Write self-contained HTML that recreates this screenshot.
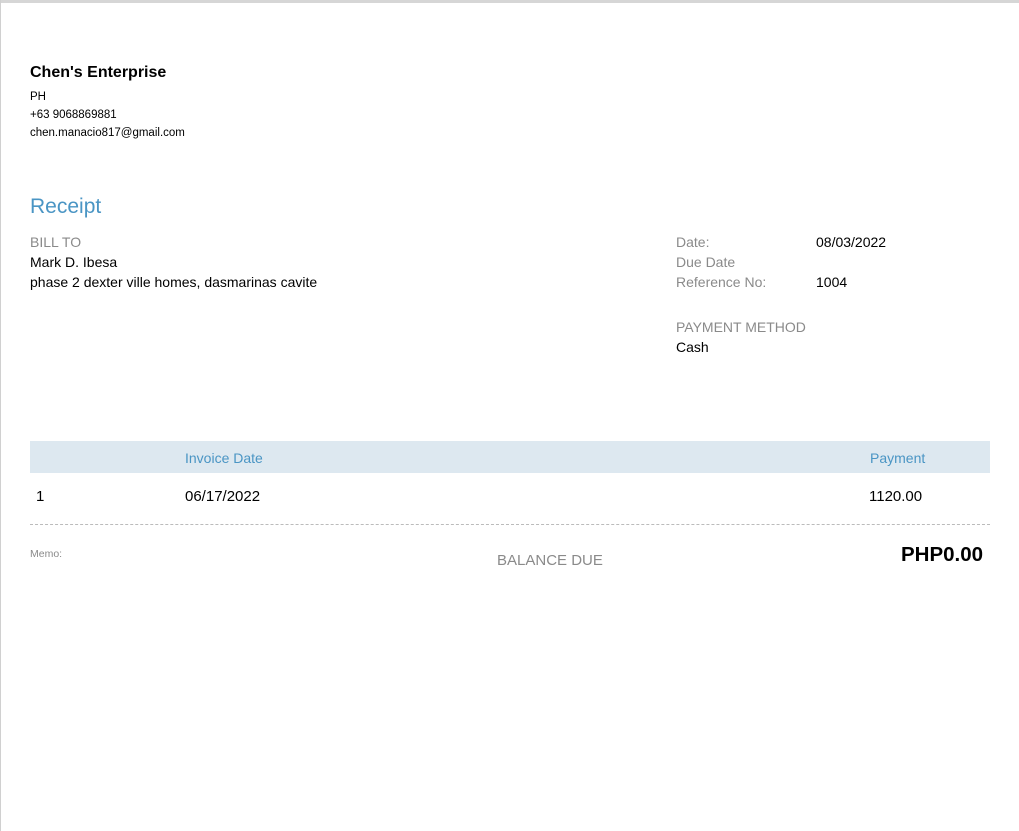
<!DOCTYPE html>
<html><head><meta charset="utf-8"><style>
*{margin:0;padding:0;box-sizing:border-box}
body{width:1019px;height:831px;background:#fff;font-family:"Liberation Sans",Arial,sans-serif;position:relative;overflow:hidden}
.a{position:absolute;white-space:nowrap;line-height:1}
.g{color:#8a8a8a}
.b{color:#4a95c4}
</style></head><body>
<div class="a" style="left:0;top:0;width:1019px;height:3px;background:#d6d6d6"></div>
<div class="a" style="left:0;top:0;width:1px;height:831px;background:#d0d0d0"></div>
<div class="a" style="left:30px;top:65px;font-size:16px;font-weight:bold">Chen's Enterprise</div>
<div class="a" style="left:30px;top:92px;font-size:11.5px">PH</div>
<div class="a" style="left:30px;top:110px;font-size:11.5px">+63 9068869881</div>
<div class="a" style="left:30px;top:128px;font-size:11.5px">chen.manacio817@gmail.com</div>
<div class="a b" style="left:30px;top:196px;font-size:21px">Receipt</div>
<div class="a g" style="left:30px;top:235px;font-size:14px">BILL TO</div>
<div class="a" style="left:30px;top:255px;font-size:14px">Mark D. Ibesa</div>
<div class="a" style="left:30px;top:275px;font-size:14px">phase 2 dexter ville homes, dasmarinas cavite</div>
<div class="a g" style="left:676px;top:235px;font-size:14px">Date:</div>
<div class="a" style="left:816px;top:235px;font-size:14px">08/03/2022</div>
<div class="a g" style="left:676px;top:255px;font-size:14px">Due Date</div>
<div class="a g" style="left:676px;top:275px;font-size:14px">Reference No:</div>
<div class="a" style="left:816px;top:275px;font-size:14px">1004</div>
<div class="a g" style="left:676px;top:320px;font-size:14px">PAYMENT METHOD</div>
<div class="a" style="left:676px;top:340px;font-size:14px">Cash</div>
<div class="a" style="left:30px;top:441px;width:960px;height:32px;background:#dde8f0"></div>
<div class="a b" style="left:185px;top:451px;font-size:14px">Invoice Date</div>
<div class="a b" style="left:870px;top:451px;font-size:14px">Payment</div>
<div class="a" style="left:36px;top:489px;font-size:15px">1</div>
<div class="a" style="left:185px;top:489px;font-size:15px">06/17/2022</div>
<div class="a" style="left:869px;top:489px;font-size:15px">1120.00</div>
<div class="a" style="left:30px;top:524px;width:960px;border-top:1px dashed #bbb"></div>
<div class="a g" style="left:30px;top:549px;font-size:10.5px">Memo:</div>
<div class="a g" style="left:497px;top:553px;font-size:15px">BALANCE DUE</div>
<div class="a" style="left:901px;top:545px;font-size:20.5px;font-weight:bold">PHP0.00</div>
</body></html>
